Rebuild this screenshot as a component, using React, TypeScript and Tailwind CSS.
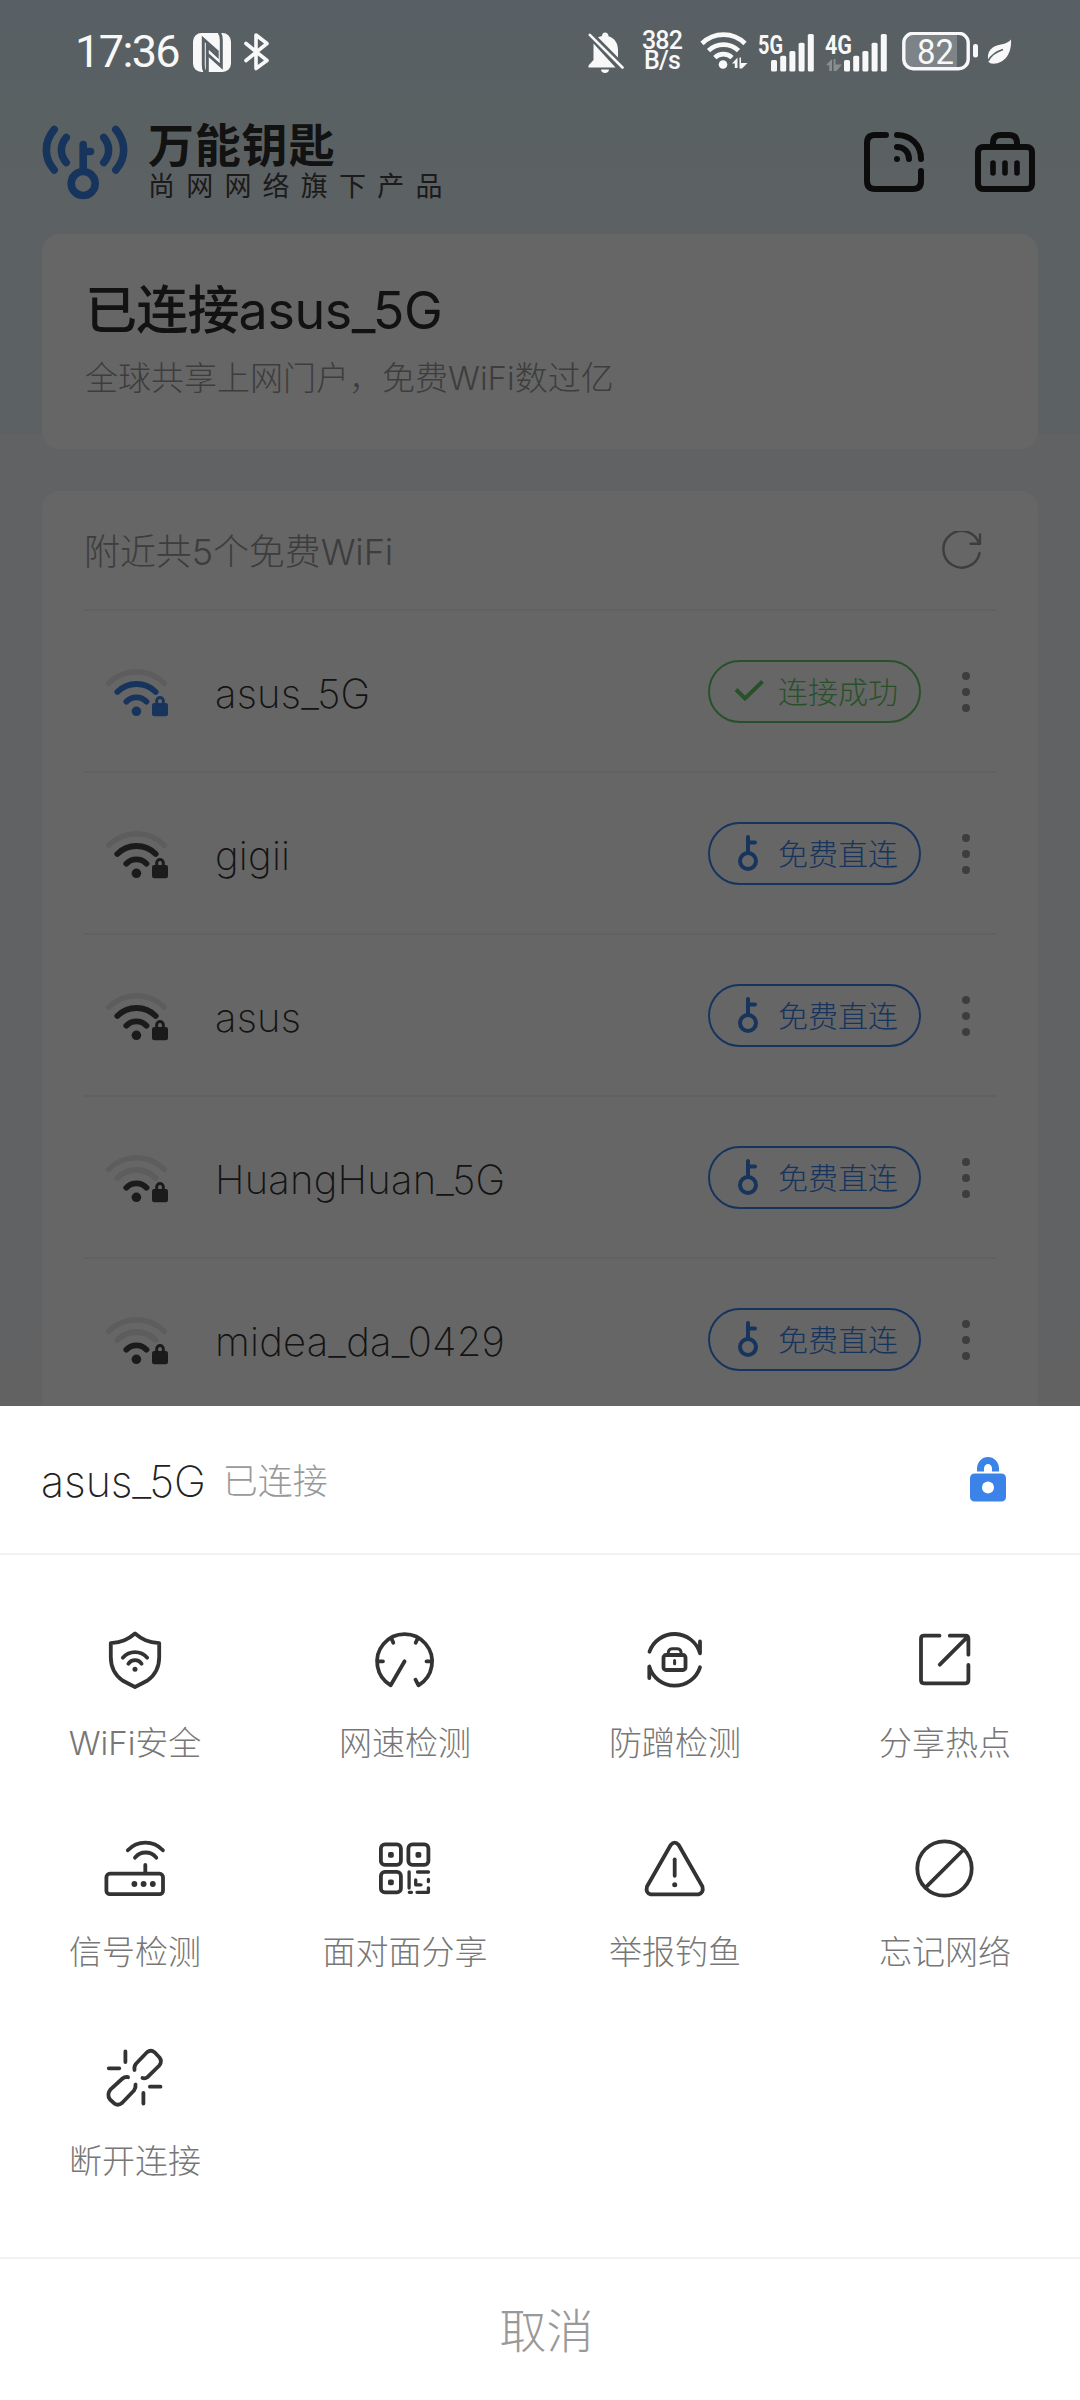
import type { ReactNode } from "react";

type Network = { ssid: string; level: 1 | 2; connected?: boolean };

const networks: Network[] = [
  { ssid: "asus_5G", level: 2, connected: true },
  { ssid: "gigii", level: 2 },
  { ssid: "asus", level: 2 },
  { ssid: "HuangHuan_5G", level: 1 },
  { ssid: "midea_da_0429", level: 1 },
];

/* ---------- status bar ---------- */

function NfcIcon() {
  return (
    <svg width="38" height="39" viewBox="0 0 38 39" className="shrink-0">
      <rect width="38" height="39" rx="8.5" fill="#f8f8f8" />
      <g fill="none" stroke="#5a6166" strokeWidth="3">
        <path d="M12.500 39.500C11 38 10.300 35.500 10.300 32V6L24.200 18.500V22.500L14.300 13.500V39" />
        <path d="M26 -0.500C27.500 1 28.300 3.500 28.300 7V33.500L14.300 21" />
      </g>
    </svg>
  );
}

function BluetoothIcon() {
  return (
    <svg width="26" height="38" viewBox="0 0 26 38" fill="none" stroke="#f8f8f8" strokeWidth="3.6" strokeLinecap="round" strokeLinejoin="round">
      <path d="M2 10.5L23 27.5L12 35.5V2L23 10.5L2 27.5" />
    </svg>
  );
}

function BellOffIcon() {
  return (
    <svg width="36" height="41" viewBox="0 0 36 41" fill="#f8f8f8">
      <path d="M5.5 11.5V28L0.5 33.5V35.5H27.5Z" />
      <path d="M10 5.2L30 25.5V18C30 11 26.5 6 20.5 4.2C20.5 -0.6 14 -0.6 14 4Z" />
      <path d="M1.8 2.8L34.5 35.5" stroke="#f8f8f8" strokeWidth="2.6" strokeLinecap="round" />
      <path d="M13 37.5H21C21 39.8 19.3 41 17 41S13 39.8 13 37.5Z" />
    </svg>
  );
}

function StatusWifiIcon() {
  return (
    <svg width="48" height="40" viewBox="0 0 48 40" fill="none" stroke="#f8f8f8" strokeWidth="4.6">
      <path d="M2 11.5A30.5 30.5 0 0 1 45 11.5" />
      <path d="M8.5 18.7A21.5 21.5 0 0 1 38.5 18.7" />
      <path d="M14.8 25.6A12.5 12.5 0 0 1 32 25.6" />
      <circle cx="23" cy="32.5" r="4.3" fill="#f8f8f8" stroke="none" />
      <path d="M32 31.5L37.5 25.5V36H34.8V31.5ZM41 25.5V31H47.5L42 36.5H39.5V25.5Z" fill="#f8f8f8" stroke="none" />
    </svg>
  );
}

function SignalIcon({ label, width, data }: { label: string; width: number; data?: boolean }) {
  const first = width - 43;
  const tops = [26, 21.7, 17, 8.7, 0];
  return (
    <svg width={width} height="48" viewBox={`0 -6 ${width} 48`} fill="#f8f8f8" className="-my-1 overflow-visible">
      <text x="0" y="19.5" fontFamily="Roboto, sans-serif" fontWeight="700" fontSize="26" textLength={data ? 27 : 25} lengthAdjust="spacingAndGlyphs">
        {label}
      </text>
      {tops.map((top, i) => (
        <rect key={top} x={first + i * 9.2} y={top} width="6" height={37.5 - top} rx="1.6" />
      ))}
      {data && <path d="M1 31L7 25V37H4.2V31.5ZM10.5 25V30.5H17L11.5 37H8.6V25Z" opacity="0.3" />}
    </svg>
  );
}

function BatteryIcon() {
  return (
    <svg width="76" height="40" viewBox="0 0 76 40">
      <rect x="3" y="3" width="52" height="33" fill="#fff" opacity="0.22" />
      <rect x="1.8" y="1.3" width="64.4" height="35.4" rx="9.5" fill="none" stroke="#f8f8f8" strokeWidth="3.4" />
      <rect x="71" y="12" width="5" height="13.5" rx="2.2" fill="#f8f8f8" />
      <text x="15" y="31.5" fontFamily="Roboto, sans-serif" fontSize="35" fill="#f8f8f8" textLength="37" lengthAdjust="spacingAndGlyphs">
        82
      </text>
    </svg>
  );
}

function LeafIcon() {
  return (
    <svg width="26" height="26" viewBox="0 0 26 26">
      <path d="M25 0.5C26 15 18 26 5 24.5L2.5 23C0 12 6 7 15 5.5C20 4.6 23 3 25 0.5Z" fill="#f8f8f8" />
      <path d="M2 22C5 16.5 9 13 17 10.5" fill="none" stroke="#596164" strokeWidth="1.8" />
    </svg>
  );
}

function StatusBar() {
  return (
    <div className="relative z-10 flex h-[104px] items-center pl-[75px] pr-[68px] font-['Roboto','Liberation_Sans',sans-serif] text-[#f8f8f8]">
      <span className="w-[118px] pb-[2px] text-[45px] leading-none tracking-[-1.6px] whitespace-nowrap">17:36</span>
      <NfcIcon />
      <div className="ml-[13px]">
        <BluetoothIcon />
      </div>
      <div className="ml-auto flex items-center">
        <BellOffIcon />
        <div className="ml-[18px] flex w-[40px] flex-col items-center pb-[2px] text-[25px] leading-[20px] font-medium tracking-[-0.8px]">
          <span>382</span>
          <span>B/s</span>
        </div>
        <div className="ml-[18px]">
          <StatusWifiIcon />
        </div>
        <div className="ml-[10px]">
          <SignalIcon label="5G" width={56} />
        </div>
        <div className="ml-[11px]">
          <SignalIcon label="4G" width={62} data />
        </div>
        <div className="ml-[15px]">
          <BatteryIcon />
        </div>
        <div className="ml-[8px]">
          <LeafIcon />
        </div>
      </div>
    </div>
  );
}

/* ---------- page behind the sheet ---------- */

function LogoIcon() {
  return (
    <svg width="86" height="75" viewBox="0 0 86 75" fill="none" stroke="#3b83e8" strokeWidth="7.6" strokeLinecap="round">
      <path d="M12.2 4.5C1.7 17 1.7 33 12.2 45" />
      <path d="M24.2 12.5C17.8 20 17.8 30 24.2 37.5" />
      <path d="M61.8 12.5C68.2 20 68.2 30 61.8 37.5" />
      <path d="M73.8 4.5C84.3 17 84.3 33 73.8 45" />
      <circle cx="41.2" cy="58.5" r="12" />
      <path d="M41.2 19.5V45M42 26.5H48.5" />
    </svg>
  );
}

function ShareIcon() {
  return (
    <svg width="60" height="60" viewBox="0 0 60 60" fill="none" stroke="#1e1e1e" strokeWidth="6" strokeLinecap="round">
      <path d="M22 3H11Q3 3 3 11V49Q3 57 11 57H49Q57 57 57 49V39" />
      <path d="M33 3C47 3 57 13 57 27" />
      <path d="M33 15C40 15 45 20 45 27" />
      <circle cx="33" cy="27" r="3" fill="#1e1e1e" stroke="none" />
    </svg>
  );
}

function ToolboxIcon() {
  return (
    <svg width="60" height="60" viewBox="0 0 60 60" fill="none" stroke="#1e1e1e" strokeWidth="6" strokeLinecap="round">
      <rect x="3" y="15" width="54" height="42" rx="5" />
      <path d="M18 14V11Q18 3 26 3H34Q42 3 42 11V14" />
      <path d="M18 31V41M30 31V41M42 31V41" strokeWidth="5.6" />
    </svg>
  );
}

function RefreshIcon() {
  return (
    <svg width="40" height="40" viewBox="0 0 40 40" fill="none" stroke="#999" strokeWidth="2.4" strokeLinecap="round" strokeLinejoin="round">
      <path d="M37.6 22A18.3 18.3 0 1 1 37.2 13" />
      <path d="M38 3.5V12.8H28.5" />
    </svg>
  );
}

function WifiLockIcon({ level, color }: { level: 1 | 2; color: string }) {
  const off = "#e9e9e9";
  return (
    <svg width="64" height="50" viewBox="0 0 64 50" fill="none" strokeLinecap="round">
      <path d="M3.7 15.3A39.3 39.3 0 0 1 59.3 15.3" stroke={off} strokeWidth="5.4" />
      <path d="M12.3 24A27 27 0 0 1 50.7 24" stroke={level > 1 ? color : off} strokeWidth="5.8" />
      <path d="M21.3 33.7A13.8 13.8 0 0 1 41.5 33.7" stroke={color} strokeWidth="5.8" />
      <circle cx="31.4" cy="43.3" r="4.8" fill={color} />
      <rect x="47" y="35" width="16" height="13.3" rx="2.2" fill={color} />
      <path d="M51.7 35V32.8A3.3 3.3 0 0 1 58.3 32.8V35" stroke={color} strokeWidth="3" />
    </svg>
  );
}

function KeyIcon() {
  return (
    <svg width="22" height="38" viewBox="0 0 22 38" fill="none" stroke="#3b83e8" strokeWidth="4" strokeLinecap="round">
      <circle cx="10" cy="27" r="8" />
      <path d="M10 3V19M11 8.5H17" />
    </svg>
  );
}

function CheckIcon() {
  return (
    <svg width="30" height="24" viewBox="0 0 30 24" fill="none" stroke="#65cb67" strokeWidth="4">
      <path d="M2 10.5L11 19.5L28.5 2.5" />
    </svg>
  );
}

function ConnectPill({ connected }: { connected?: boolean }) {
  const tone = connected ? "border-[#65cb67] text-[#65cb67]" : "border-[#3b83e8] text-[#3b83e8]";
  return (
    <div className={`flex h-[63px] w-[213px] items-center rounded-full border-2 ${tone}`}>
      <div className="flex w-[68px] justify-center pl-[10px]">{connected ? <CheckIcon /> : <KeyIcon />}</div>
      <span className="pt-[2px] text-[30px] leading-none font-light whitespace-nowrap">{connected ? "连接成功" : "免费直连"}</span>
    </div>
  );
}

function NetworkRow({ ssid, level, connected }: Network) {
  return (
    <div className="flex h-[162px] items-center border-b-2 border-[#f2f2f2] pl-[21px] pr-[26px]">
      <div className="pt-[4px]">
        <WifiLockIcon level={level} color={connected ? "#3b83e8" : "#444"} />
      </div>
      <span className="ml-[46px] flex-1 pt-[5px] text-[40px] leading-none font-extralight tracking-[0.2px] text-[#333]">{ssid}</span>
      <ConnectPill connected={connected} />
      <div className="ml-[41px] flex flex-col gap-2 pt-[2px]">
        <i className="size-2 rounded-full bg-[#999]" />
        <i className="size-2 rounded-full bg-[#999]" />
        <i className="size-2 rounded-full bg-[#999]" />
      </div>
    </div>
  );
}

/* ---------- action sheet ---------- */

function ActionIcon({ children }: { children: ReactNode }) {
  return (
    <svg width="68" height="68" viewBox="0 0 68 68" fill="none" stroke="#333" strokeWidth="3.8" strokeLinecap="round" strokeLinejoin="round">
      {children}
    </svg>
  );
}

const actions: { label: string; icon: ReactNode }[] = [
  {
    label: "WiFi安全",
    icon: (
      <>
        <path d="M34 7.5C41 13.5 47 16 58.2 17.2V31C58.2 41 53.5 49.5 46.5 54.5Q41 57.5 34 61Q27 57.5 21.5 54.5C14.5 49.5 9.8 41 9.8 31V17.2C21 16 27 13.5 34 7.5Z" />
        <path d="M21.8 31.7A16.3 16.3 0 0 1 46.2 31.7M27.4 37.7A7.9 7.9 0 0 1 40.6 37.7" />
        <circle cx="34" cy="43.3" r="2.5" fill="#333" stroke="none" />
      </>
    ),
  },
  {
    label: "网速检测",
    icon: (
      <>
        <path d="M33.6 35.3L19.7 59.3A27.5 27.5 0 1 1 47.5 59.3L44.5 53.7" />
        <path d="M7 35.3H12M55.5 35.3H60.5M20.3 12L22.3 16.7M46.9 12L44.7 16.7" />
      </>
    ),
  },
  {
    label: "防蹭检测",
    icon: (
      <>
        <path d="M8.5 25.7A26.5 26.5 0 0 1 59 27.3V15.5" />
        <path d="M59 41.3A26.5 26.5 0 0 1 8.3 40.5V52" />
        <rect x="22.5" y="29" width="22" height="15" rx="2.5" />
        <path d="M27.2 28C27.2 24 29 22.8 31 22.8H36.5C39 22.8 40.2 24.5 40.2 28M33.6 34.5V37.8" strokeWidth="3" />
      </>
    ),
  },
  {
    label: "分享热点",
    icon: (
      <>
        <path d="M28.5 9.7H13Q10 9.7 10 12.7V54.3Q10 57.3 13 57.3H54.4Q57.4 57.3 57.4 54.3V39" />
        <path d="M38.8 9.7H54.4Q57.4 9.7 57.4 12.7V28.7M28.8 38.7L56.5 10.8" />
      </>
    ),
  },
  {
    label: "信号检测",
    icon: (
      <>
        <rect x="5.4" y="38.7" width="56.6" height="20.5" rx="3.5" />
        <path d="M44.3 30V38M26.8 15.3A24 24 0 0 1 61.9 15.3M34 22.7A13.5 13.5 0 0 1 55.3 22.7" />
        <g fill="#333" stroke="none">
          <circle cx="33.4" cy="49" r="2.9" />
          <circle cx="42.6" cy="49" r="2.9" />
          <circle cx="51.8" cy="49" r="2.9" />
        </g>
      </>
    ),
  },
  {
    label: "面对面分享",
    icon: (
      <>
        <rect x="9.9" y="9.4" width="20" height="20.5" rx="4" />
        <rect x="37.4" y="9.4" width="20" height="20.5" rx="4" />
        <rect x="9.9" y="36.9" width="20" height="20.5" rx="4" />
        <g fill="#333" stroke="none">
          <rect x="17" y="17" width="5.8" height="5.8" rx="1.8" />
          <rect x="44.5" y="17" width="5.8" height="5.8" rx="1.8" />
          <rect x="17" y="44.5" width="5.8" height="5.8" rx="1.8" />
        </g>
        <path d="M38.1 36.8V53M46.5 37H57.5M57.4 44.5V46.5M44.7 44.8V49.8H50M57.4 52.8V57.3H46M38.3 57.3H40.5" strokeWidth="3.3" />
      </>
    ),
  },
  {
    label: "举报钓鱼",
    icon: (
      <>
        <path d="M29.7 10Q33.7 5.4 37.7 10L61.4 51.5Q63 58 57.5 59.3H9.7Q4.3 58 6 51.5Z" />
        <path d="M33.7 24.3V40.8" />
        <circle cx="33.7" cy="49.7" r="2.5" fill="#333" stroke="none" />
      </>
    ),
  },
  {
    label: "忘记网络",
    icon: (
      <>
        <circle cx="33.5" cy="33.5" r="27.2" />
        <path d="M14.5 52.7L52.7 14.5" />
      </>
    ),
  },
  {
    label: "断开连接",
    icon: (
      <>
        <path d="M33.5 26C33 23 33.5 21.5 35 19.7L46 8.3Q49.9 5 53.6 8.3L58.5 13.5Q61.5 17.5 58.3 21.5L47 32.7Q44 35 41.5 34" />
        <path d="M27 33.2Q24 32.5 21.5 34.5L9.3 45.7Q5.5 50.5 9 55.5L13.5 59.7Q17.3 62 21 59L33 46.5Q35 43.5 34.5 40.5" />
        <path d="M24.4 7.5V18M7.8 24.3H18.3M42.4 49V59.5M48.9 42.7H59.5" />
      </>
    ),
  },
];

function SheetLockIcon() {
  return (
    <svg width="36" height="45" viewBox="0 0 36 45">
      <path d="M10.5 14.500V11.500A7.500 8 0 0 1 25.500 11.500V14.500" fill="none" stroke="#3b83e8" strokeWidth="7" />
      <path d="M5 16.5H31Q36 16.5 36 21.5V39.5Q36 44.5 31 44.5H5Q0 44.5 0 39.5V21.5Q0 16.5 5 16.5Z" fill="#3b83e8" />
      <circle cx="18" cy="30.5" r="6" fill="#fff" />
    </svg>
  );
}

function ActionSheet() {
  return (
    <div className="flex h-[994px] flex-col bg-white">
      <div className="flex h-[149px] items-center border-b-2 border-[#f2f2f2] pl-[41px] pr-[74px]">
        <span className="pt-[3px] text-[43px] leading-none font-extralight tracking-[-0.1px] text-[#222]">asus_5G</span>
        <span className="ml-[17px] flex-1 pt-[3px] text-[35px] leading-none font-light text-[#999]">已连接</span>
        <SheetLockIcon />
      </div>
      <div className="grid h-[704px] grid-cols-4 content-start gap-y-[69px] border-b-2 border-[#f2f2f2] pt-[71px]">
        {actions.map((a) => (
          <div key={a.label} className="flex h-[140px] flex-col items-center justify-between">
            <ActionIcon>{a.icon}</ActionIcon>
            <span className="-mb-[1px] text-[33px] leading-[48px] font-light text-[#777]">{a.label}</span>
          </div>
        ))}
      </div>
      <div className="flex flex-1 items-center justify-center pt-[4px] pl-[13px] text-[47px] font-light text-[#999]">取消</div>
    </div>
  );
}

export default function App() {
  return (
    <div className="h-[2400px] w-[1080px] overflow-hidden bg-white font-['Inter','Noto_Sans_CJK_SC',sans-serif]">
      <div className="relative h-[1406px] overflow-hidden bg-[#f3f4f8]">
        <div className="bg-[linear-gradient(180deg,#dceefe_0px,#e0f3f6_110px,#e7f3f8_200px,#e8f2f7_433px,#f2f4f8_434px,#f4f4f8_1406px)]">
          <StatusBar />
          <div className="flex h-[116px] items-center pl-[42px] pr-[45px]">
            <LogoIcon />
            <div className="ml-[20px] flex-1 pt-[2px]">
              <div className="text-[46px] leading-[46px] font-bold tracking-[0.8px] text-[#2d2d2d]">万能钥匙</div>
              <div className="pt-[1px] text-[27px] leading-[36px] font-normal tracking-[11.2px] text-[#444]">尚网网络旗下产品</div>
            </div>
            <ShareIcon />
            <div className="ml-[51px]">
              <ToolboxIcon />
            </div>
          </div>
          <div className="mx-[42px] mt-[14px] h-[215px] rounded-[18px] bg-white px-[43px] pt-[47px]">
            <div className="text-[52px] leading-[60px] font-medium tracking-[-0.8px] text-[#2d2d2d]">
              已连接<span className="font-normal tracking-[-0.4px]">asus_5G</span>
            </div>
            <div className="mt-[13px] text-[33px] leading-[48px] font-light text-[#999]">全球共享上网门户，免费WiFi数过亿</div>
          </div>
          <div className="mx-[42px] mt-[42px] rounded-t-[18px] bg-white px-[42px]">
            <div className="flex h-[120px] items-center justify-between border-b-2 border-[#f2f2f2] pr-[14px]">
              <span className="pt-[3px] text-[36px] leading-none font-light tracking-[-0.1px] text-[#999]">附近共5个免费WiFi</span>
              <div className="pt-[2px]">
                <RefreshIcon />
              </div>
            </div>
            {networks.map((n) => (
              <NetworkRow key={n.ssid} {...n} />
            ))}
          </div>
        </div>
        <div className="pointer-events-none absolute inset-0 bg-black/60" />
      </div>
      <ActionSheet />
    </div>
  );
}
